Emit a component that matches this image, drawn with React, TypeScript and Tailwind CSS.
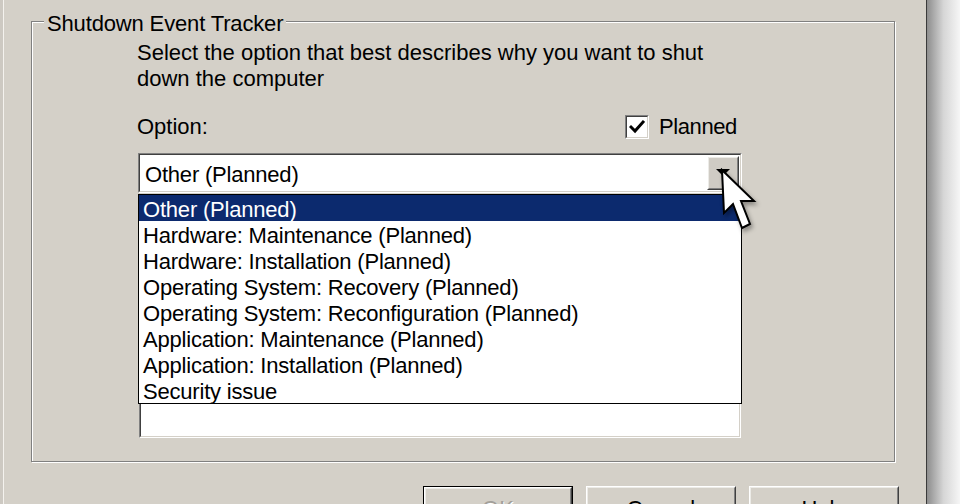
import React from 'react';

const options = [
  'Other (Planned)',
  'Hardware: Maintenance (Planned)',
  'Hardware: Installation (Planned)',
  'Operating System: Recovery (Planned)',
  'Operating System: Reconfiguration (Planned)',
  'Application: Maintenance (Planned)',
  'Application: Installation (Planned)',
  'Security issue',
];

function Raised({ children, className = '' }: { children?: React.ReactNode; className?: string }) {
  return (
    <div className={`border border-t-white border-l-white border-r-[#404040] border-b-[#404040] ${className}`}>
      <div className="w-full h-full border border-t-[#ecebe7] border-l-[#ecebe7] border-r-[#808080] border-b-[#808080] flex items-center justify-center">
        {children}
      </div>
    </div>
  );
}

function Button({ label, isDefault, disabled }: { label: string; isDefault?: boolean; disabled?: boolean }) {
  const text = (
    <span className={disabled ? 'text-[#a3a09a] [text-shadow:1px_1px_0_#fff]' : 'text-black'}>{label}</span>
  );
  if (isDefault) {
    return (
      <div className="w-[150px] h-[46px] shrink-0 border border-black">
        <Raised className="w-full h-full">{text}</Raised>
      </div>
    );
  }
  return <Raised className="w-[150px] h-[46px] shrink-0">{text}</Raised>;
}

function Sunken({ children, className = '' }: { children?: React.ReactNode; className?: string }) {
  return (
    <div className={`border border-t-[#808080] border-l-[#808080] border-r-white border-b-white ${className}`}>
      <div className="w-full h-full border border-t-[#404040] border-l-[#404040] border-r-[#d4d0c8] border-b-[#d4d0c8] bg-white">
        {children}
      </div>
    </div>
  );
}

function Cursor() {
  return (
    <svg
      className="absolute left-[720px] top-[168px] drop-shadow-[2px_3px_2px_rgba(0,0,0,0.35)]"
      width="40"
      height="66"
      viewBox="0 0 40 66"
    >
      <path
        d="M2 2 L4 45 L13 36 L22 60 L30 56 L21 33 L34 33 Z"
        fill="#fff"
        stroke="#000"
        strokeWidth="2"
        strokeLinejoin="miter"
      />
    </svg>
  );
}

export default function App() {
  return (
    <div className="relative w-[960px] h-[504px] flex overflow-hidden bg-white text-black text-[22px] leading-[26px] font-['Liberation_Sans',Arial,sans-serif]">
      <div className="w-[927px] h-full shrink-0 bg-[#d4d0c8] border-r border-r-[#3a3a3a] shadow-[inset_3px_0_0_#cdc9c2,inset_4px_0_0_#f4f2ee] pt-[21px] pl-[31px]">
        {/* group box */}
        <div className="relative w-[864px] h-[441px] border border-[#808080] shadow-[inset_1px_1px_0_#fff,1px_1px_0_#fff] pt-[18px] pl-[105px]">
          <div className="absolute left-[12px] top-[-11px] px-[3px] bg-[#d4d0c8] whitespace-nowrap tracking-[-0.15px]">
            Shutdown Event Tracker
          </div>

          <p className="whitespace-nowrap">
            Select the option that best describes why you want to shut
            <br />
            down the computer
          </p>

          <div className="mt-[22px] h-[26px] flex items-center">
            <span className="w-[488px] shrink-0">Option:</span>
            <div className="w-[24px] h-[24px] shrink-0 border border-t-[#808080] border-l-[#808080] border-r-white border-b-white">
              <div className="w-full h-full border border-t-[#404040] border-l-[#404040] border-r-[#d4d0c8] border-b-[#d4d0c8] bg-white flex items-center justify-center">
                <svg width="16" height="16" viewBox="0 0 16 16">
                  <path d="M2 8 L6 12 L14 3" fill="none" stroke="#000" strokeWidth="3" strokeLinecap="square" />
                </svg>
              </div>
            </div>
            <span className="ml-[10px] tracking-[-0.4px]">Planned</span>
          </div>

          {/* combo box */}
          <Sunken className="mt-[13px] ml-px w-[604px] h-[40px]">
            <div className="w-full h-full flex items-center justify-between pl-[5px] pr-px">
              <span className="pt-[3px] tracking-[-0.2px]">Other (Planned)</span>
              <Raised className="w-[32px] h-[34px] bg-[#cfcbc4]">
                <svg width="14" height="8" viewBox="0 0 14 8">
                  <path d="M0 0 H14 L7 7 Z" fill="#000" />
                </svg>
              </Raised>
            </div>
          </Sunken>

          {/* comment box, mostly hidden behind the open list */}
          <Sunken className="mt-[8px] ml-[2px] w-[602px] h-[237px]" />

          {/* open dropdown list */}
          <div className="absolute left-[106px] top-[172px] w-[604px] h-[210px] border border-black bg-white">
            {options.map((o, i) => (
              <div
                key={o}
                className={`h-[26px] pt-[2px] pl-[4px] whitespace-nowrap tracking-[-0.2px] ${
                  i === 0 ? 'bg-[#0c2a6e] text-white' : 'text-black'
                }`}
              >
                {o}
              </div>
            ))}
          </div>
        </div>

        {/* buttons */}
        <div className="mt-[24px] ml-[392px] flex gap-[13px]">
          <Button label="OK" isDefault disabled />
          <Button label="Cancel" />
          <Button label="Help" />
        </div>
      </div>
      <div className="flex-1 h-full bg-gradient-to-r from-[#8e8e8e] via-[#d6d6d6] to-[#f6f6f6]" />
      <Cursor />
    </div>
  );
}
